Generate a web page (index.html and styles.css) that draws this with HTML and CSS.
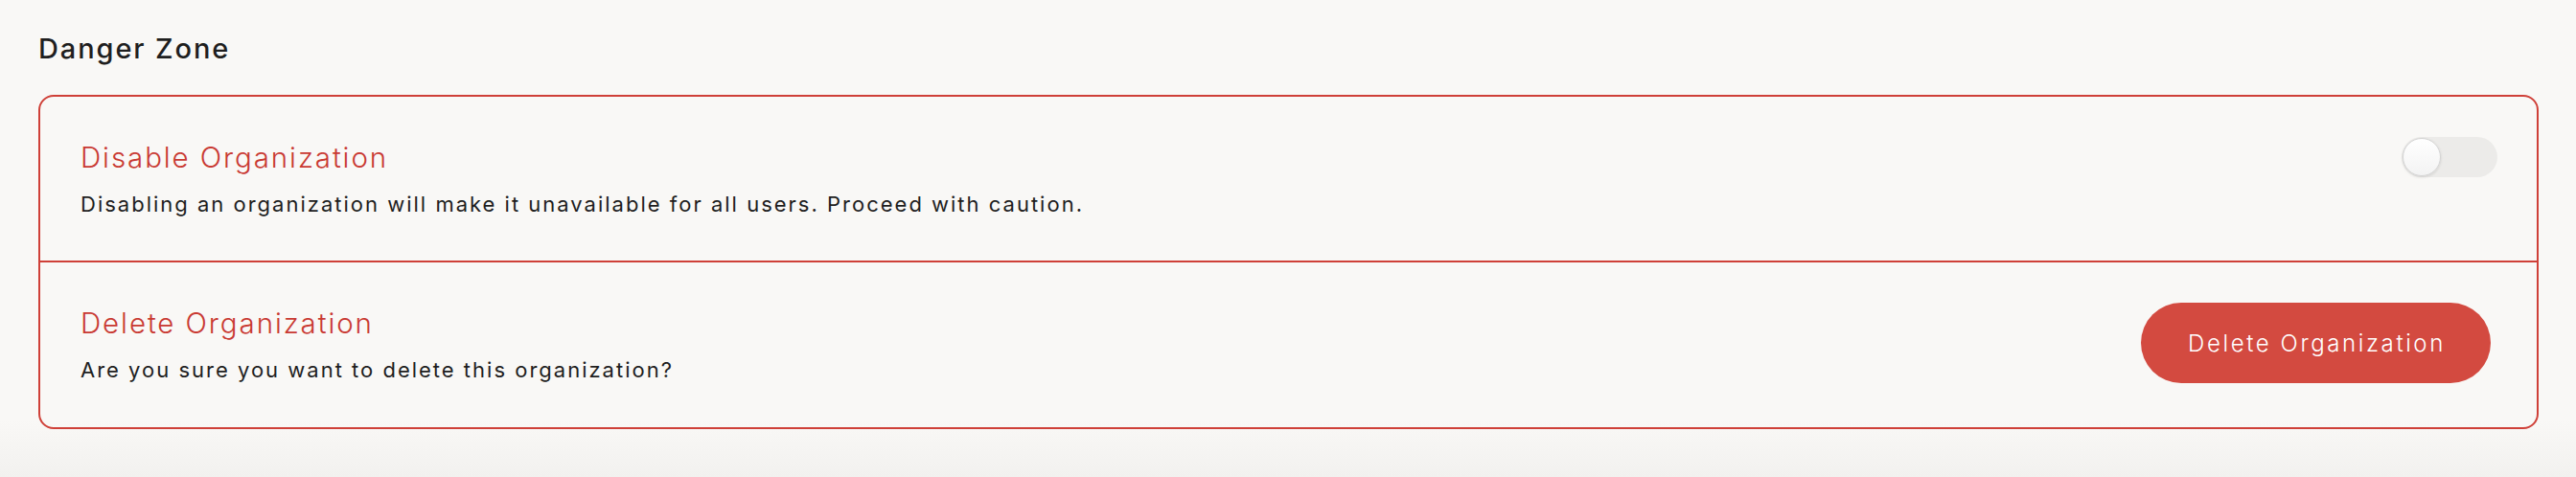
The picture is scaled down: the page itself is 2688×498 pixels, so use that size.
FILE: index.html
```html
<!DOCTYPE html>
<html lang="en">
<head>
<meta charset="utf-8">
<title>Danger Zone</title>
<link rel="stylesheet" href="styles.css">
</head>
<body>
<main class="page">
  <h2 class="section-title">Danger Zone</h2>
  <section class="danger-card">
    <div class="danger-row">
      <div class="danger-text">
        <h3 class="danger-title">Disable Organization</h3>
        <p class="danger-desc">Disabling an organization will make it unavailable for all users. Proceed with caution.</p>
      </div>
      <button class="toggle" type="button" aria-label="Disable organization"><span class="toggle-knob"></span></button>
    </div>
    <div class="danger-row danger-row--last">
      <div class="danger-text">
        <h3 class="danger-title">Delete Organization</h3>
        <p class="danger-desc">Are you sure you want to delete this organization?</p>
      </div>
      <button class="danger-btn" type="button">Delete Organization</button>
    </div>
  </section>
</main>
</body>
</html>
```

FILE: styles.css
```css
* { box-sizing: border-box; }

html, body {
  margin: 0;
  height: 100%;
}

body {
  background: linear-gradient(to bottom, #f9f8f6 0%, #f9f8f6 88%, #f2f1ef 100%);
  font-family: "Inter", "Liberation Sans", sans-serif;
  color: #1e1e1e;
}

.page {
  padding: 33px 39px 0 40px;
}

.section-title {
  margin: 0;
  font-size: 29px;
  line-height: 36px;
  font-weight: 500;
  letter-spacing: 1.9px;
  color: #1f1f1f;
}

.danger-card {
  margin-top: 30px;
  border: 2px solid #cf4038;
  border-radius: 16px;
}

.danger-row {
  display: flex;
  justify-content: space-between;
  align-items: flex-start;
  padding: 42px 41px 43px 42px;
  border-bottom: 2px solid #cf4038;
}

.danger-row--last {
  padding-bottom: 44px;
  border-bottom: none;
}

.danger-title {
  margin: 0;
  font-size: 29.5px;
  line-height: 42px;
  font-weight: 300;
  letter-spacing: 1.9px;
  color: #c93a33;
}

.danger-desc {
  margin: 12px 0 0;
  font-size: 22px;
  line-height: 32px;
  font-weight: 400;
  letter-spacing: 2px;
  color: #1e1e1e;
}

.toggle {
  position: relative;
  width: 100px;
  height: 42px;
  padding: 0;
  border: none;
  border-radius: 21px;
  background: #ecebe9;
  cursor: pointer;
}

.toggle-knob {
  position: absolute;
  left: 1px;
  top: 1px;
  width: 40px;
  height: 40px;
  border-radius: 50%;
  background: linear-gradient(to bottom, #ffffff, #f3f3f3);
  border: 1px solid #d4d4d4;
  box-shadow: 0 1px 3px rgba(0, 0, 0, 0.12);
}

.danger-btn {
  width: 365px;
  height: 84px;
  margin-right: 7px;
  padding: 0 0 0 2px;
  border: none;
  border-radius: 42px;
  background: #d34a40;
  color: #ffffff;
  font-family: inherit;
  font-size: 24px;
  font-weight: 300;
  letter-spacing: 2.6px;
  cursor: pointer;
}
```
